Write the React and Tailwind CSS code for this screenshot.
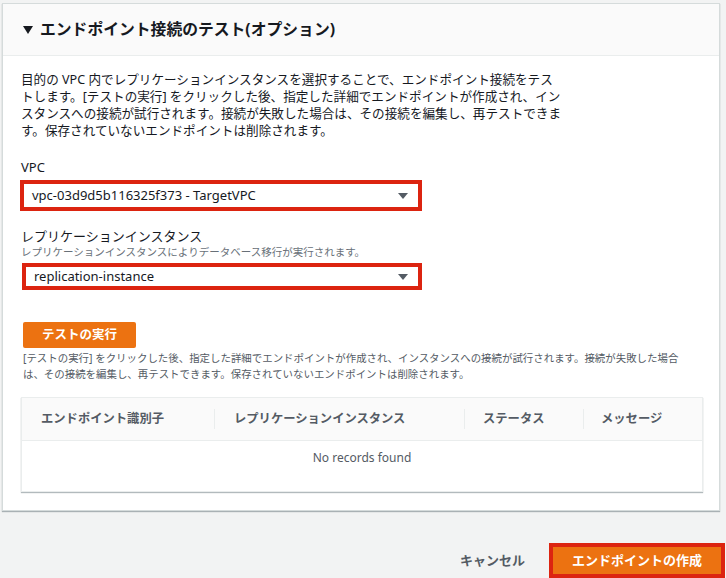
const font = { fontFamily: '"Noto Sans", "Noto Sans CJK JP", sans-serif' };

function Caret({ className }) {
  return (
    <svg className={className} width="10" height="6" viewBox="0 0 10 6">
      <path d="M0 0 L10 0 L5 6 Z" fill="#545b64" />
    </svg>
  );
}

function SelectBox({ value, className }) {
  return (
    <div className={`border-[4px] border-[#dc2410] bg-white flex items-center justify-between pl-[8px] pr-[10px] ${className}`}>
      <span className="text-[13px] text-[#16191f]">{value}</span>
      <Caret />
    </div>
  );
}

export default function App() {
  return (
    <div className="w-[726px] h-[578px] bg-[#f2f3f3] overflow-hidden pt-[3px] text-[#16191f]" style={font}>
      <div className="ml-[2px] w-[718px] h-[508px] bg-white border border-[#d5dbdb] shadow-[0_1px_1px_rgba(0,28,36,0.3)]">
        <div className="h-[52px] bg-[#fafafa] border-b border-[#eaeded] flex items-center pl-[20px] gap-[7px]">
          <svg width="10" height="8" viewBox="0 0 10 8">
            <path d="M0 0 L10 0 L5 8 Z" fill="#16191f" />
          </svg>
          <h2 className="text-[15.8px] font-bold">エンドポイント接続のテスト(オプション)</h2>
        </div>

        <div className="px-[18px] pt-[15px]">
          <p className="text-[12.6px] leading-[17px] whitespace-nowrap">
            目的の VPC 内でレプリケーションインスタンスを選択することで、エンドポイント接続をテス<br />
            トします。[テストの実行] をクリックした後、指定した詳細でエンドポイントが作成され、イン<br />
            スタンスへの接続が試行されます。接続が失敗した場合は、その接続を編集し、再テストできま<br />
            す。保存されていないエンドポイントは削除されます。
          </p>

          <div className="mt-[20px] text-[13px] leading-[17px]">VPC</div>
          <SelectBox value="vpc-03d9d5b116325f373 - TargetVPC" className="mt-[4px] w-[402px] h-[31px] -ml-[1px]" />

          <div className="mt-[17px] text-[13px] leading-[17px]">レプリケーションインスタンス</div>
          <div className="text-[10.5px] leading-[14px] text-[#687078]">レプリケーションインスタンスによりデータベース移行が実行されます。</div>
          <SelectBox value="replication-instance" className="mt-[4px] w-[400px] h-[27px] ml-[1px]" />

          <button className="mt-[32px] ml-[2px] w-[113px] h-[26px] bg-[#ec7211] text-white text-[12.5px] font-bold rounded-[2px]">
            テストの実行
          </button>
          <p className="mt-[2px] ml-[2px] text-[10.45px] leading-[16px] text-[#545b64] whitespace-nowrap">
            [テストの実行] をクリックした後、指定した詳細でエンドポイントが作成され、インスタンスへの接続が試行されます。接続が失敗した場合<br />
            は、その接続を編集し、再テストできます。保存されていないエンドポイントは削除されます。
          </p>

          <div className="mt-[15px] w-[682px] h-[95px] border border-[#eaeded] shadow-[0_1px_1px_rgba(0,28,36,0.3)]">
            <div className="h-[43px] bg-[#fafafa] border-b border-[#eaeded] flex items-center text-[12.3px] font-bold text-[#545b64]">
              <div className="w-[193px] pl-[19px] border-r border-[#eaeded] h-[20px] flex items-center">エンドポイント識別子</div>
              <div className="w-[250px] pl-[19px] border-r border-[#eaeded] h-[20px] flex items-center">レプリケーションインスタンス</div>
              <div className="w-[119px] pl-[18px] border-r border-[#eaeded] h-[20px] flex items-center">ステータス</div>
              <div className="pl-[17px] h-[20px] flex items-center">メッセージ</div>
            </div>
            <div className="text-center text-[12px] text-[#545b64] pt-[8px]">No records found</div>
          </div>
        </div>
      </div>

      <div className="flex justify-end items-center mt-[32px] mr-[1px] gap-[24px]">
        <span className="text-[13px] font-bold text-[#545b64]">キャンセル</span>
        <div className="border-[4px] border-[#dc2410] w-[176px] h-[35px]">
          <button className="w-full h-full bg-[#ec7211] text-white text-[13px] font-bold">エンドポイントの作成</button>
        </div>
      </div>
    </div>
  );
}
